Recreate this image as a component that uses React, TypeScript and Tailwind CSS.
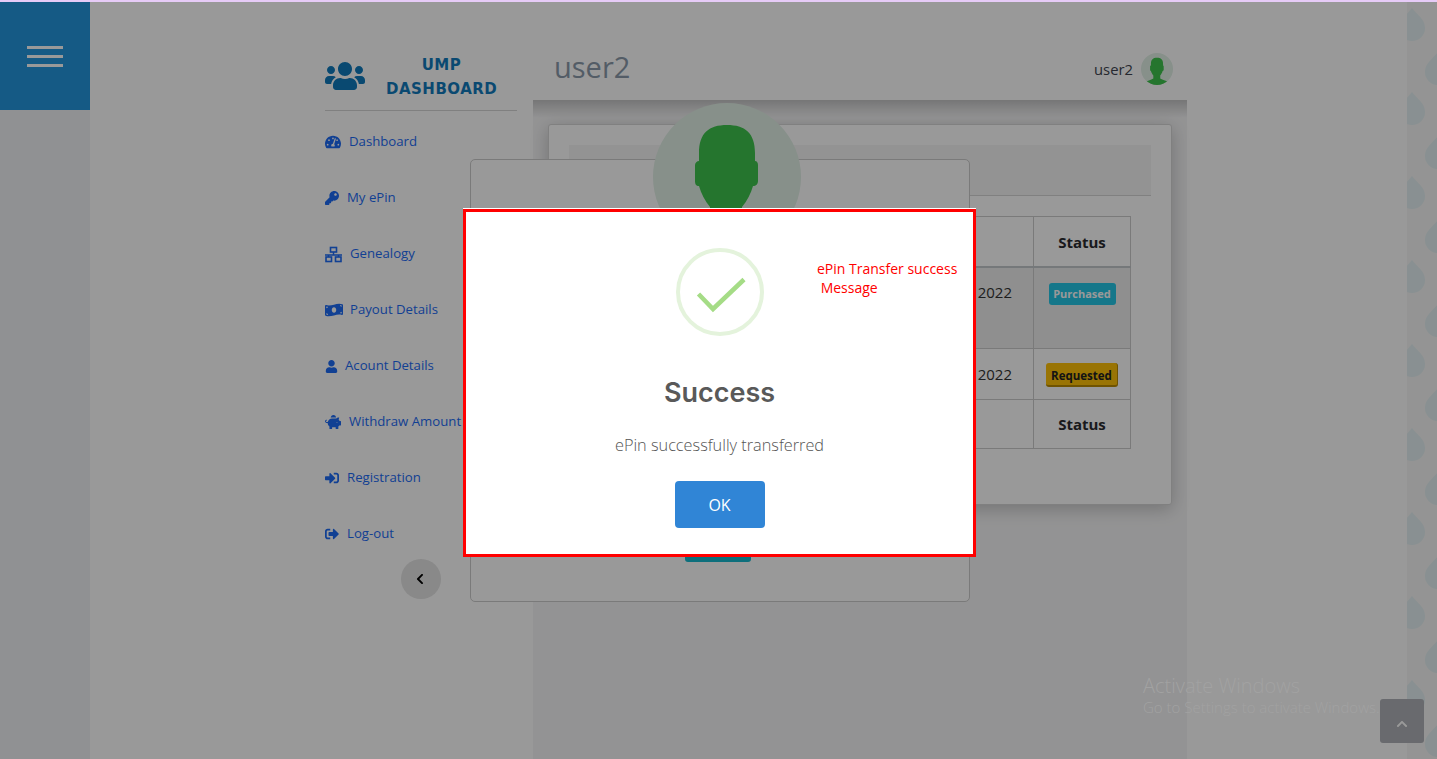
import {
  FaChevronLeft,
  FaChevronUp,
  FaKey,
  FaMoneyBillWave,
  FaPiggyBank,
  FaSignInAlt,
  FaSignOutAlt,
  FaTachometerAlt,
  FaUser,
  FaUsers,
} from "react-icons/fa";

function GenealogyIcon({ size }: { size: number }) {
  return (
    <svg width={size} height={size} viewBox="0 0 17 17" className="shrink-0" fill="none" stroke="currentColor">
      <rect x="5.5" y="1.5" width="6" height="4.5" strokeWidth="1.6" />
      <path d="M8.5 6v3M0 9h17" strokeWidth="1.5" />
      <path d="M3.5 9v2M13.5 9v2" strokeWidth="1.5" />
      <rect x="1" y="11" width="5.5" height="4.5" strokeWidth="1.6" />
      <rect x="10.5" y="11" width="5.5" height="4.5" strokeWidth="1.6" />
    </svg>
  );
}

const menu = [
  { label: "Dashboard", icon: FaTachometerAlt, size: 16, gap: "gap-[8px]" },
  { label: "My ePin", icon: FaKey, size: 14, gap: "gap-[8px]" },
  { label: "Genealogy", icon: GenealogyIcon, size: 17, gap: "gap-[8px]" },
  { label: "Payout Details", icon: FaMoneyBillWave, size: 18, gap: "gap-[7px]" },
  { label: "Acount Details", icon: FaUser, size: 13, gap: "gap-[7px]" },
  { label: "Withdraw Amount", icon: FaPiggyBank, size: 16, gap: "gap-[8px]" },
  { label: "Registration", icon: FaSignInAlt, size: 14, gap: "gap-[8px]" },
  { label: "Log-out", icon: FaSignOutAlt, size: 14, gap: "gap-[8px]" },
];

const dropsLeft = [0, 1, 2, 3, 4, 5, 6, 7, 8];
const dropPath = "c5 7 13 11 13 20a13 13 0 0 1-26 0c0-9 8-13 13-20z";

function AvatarFigure({ className }: { className: string }) {
  return (
    <div className={`overflow-hidden rounded-full bg-[#e1f0e6] ${className}`}>
      <svg viewBox="0 0 148 148" className="h-full w-full" fill="#3fc34e">
        <path d="M46 50c0-20 10-28 28-28s28 8 28 28v8c2 0 3 2 3 4v16c0 3-2 5-5 5-2 7-6 15-11 21v14c10 7 33 9 44 23v9H15v-9c11-14 32-16 42-23v-14c-5-6-9-14-11-21-3 0-4-2-4-5V62c0-2 2-4 4-4z" />
      </svg>
    </div>
  );
}

function StatusHead({ className = "" }: { className?: string }) {
  return <th className={`border border-[#cccccc] text-center text-[15px] font-bold text-[#2b2b30] ${className}`}>Status</th>;
}

export default function App() {
  return (
    <main
      className="relative flex h-[759px] w-full overflow-hidden bg-white"
      style={{ fontFamily: '"Open Sans", "Noto Sans", sans-serif' }}
    >
      <div className="absolute inset-x-0 top-0 z-50 h-[2px] bg-[#e6cbf7]" />

      {/* left strip */}
      <aside className="flex w-[90px] shrink-0 flex-col bg-[#f0f2f5] pt-[2px]">
        <button className="flex h-[108px] w-[90px] flex-col items-center justify-center gap-[6px] bg-[#2396de]">
          <span className="h-[3px] w-[36px] bg-white" />
          <span className="h-[3px] w-[36px] bg-white" />
          <span className="h-[3px] w-[36px] bg-white" />
        </button>
      </aside>

      {/* sidebar */}
      <nav className="ml-[235px] w-[192px] shrink-0 pt-[2px]">
        <div className="flex h-[109px] items-start border-b border-[#d5d5d5] pt-[51px]">
          <FaUsers className="mt-[3px] text-[#0f7bbd]" size={40} />
          <div
            className="ml-[21px] w-[111px] text-center text-[15px] leading-[24px] font-bold tracking-[0.5px] text-[#127bbd]"
            style={{ fontFamily: '"DejaVu Sans", sans-serif' }}
          >
            UMP
            <br />
            DASHBOARD
          </div>
        </div>
        <ul className="mt-[3px]">
          {menu.map(({ label, icon: Icon, size, gap }) => (
            <li key={label} className={`flex h-[56px] items-center whitespace-nowrap text-[13.2px] text-[#1d6bf5] ${gap}`}>
              <Icon size={size} className="shrink-0" />
              <span>{label}</span>
            </li>
          ))}
        </ul>
        <button className="ml-[76px] mt-[-3px] flex h-[40px] w-[40px] items-center justify-center rounded-full bg-[#e4e4e4] pr-[2px] text-black">
          <FaChevronLeft size={12} />
        </button>
      </nav>

      {/* content */}
      <section className="ml-[16px] flex w-[654px] shrink-0 flex-col pt-[2px]">
        <header className="flex h-[98px] shrink-0 items-center justify-between bg-white pl-[21px] pr-[14px] pt-[36px]">
          <h1 className="mb-[4px] text-[29px] text-[#8a9aaa]">user2</h1>
          <div className="flex items-center gap-[8px] text-[14.8px] text-[#40444f]">
            <span>user2</span>
            <AvatarFigure className="h-[32px] w-[32px]" />
          </div>
        </header>

        <div className="flex-1 bg-[#f6f6f7] bg-[linear-gradient(to_bottom,rgba(0,0,0,0.2),rgba(0,0,0,0)_18px)] px-[15px] pt-[24px]">
          <div className="h-[381px] rounded-[3px] border border-[#d5d5d5] bg-white p-[20px] shadow-[0_4px_18px_rgba(0,0,0,0.22)]">
            <div className="h-[51px] border-b border-[#d5d5d5] bg-[#f5f5f5]" />
            <table className="mt-[20px] h-[232px] w-[561px] table-fixed border-collapse text-[15px] text-[#333333]">
              <colgroup>
                <col className="w-[464px]" />
                <col className="w-[97px]" />
              </colgroup>
              <tbody>
                <tr className="h-[50px] border-b-2 border-[#c4c8cc]">
                  <td className="border border-[#cccccc]" />
                  <StatusHead className="pt-[1px]" />
                </tr>
                <tr className="h-[82px] bg-[#eeeeee]">
                  <td className="border border-[#cccccc] pr-[21px] pt-[13px] text-right align-top">2022</td>
                  <td className="border border-[#cccccc] pt-[13px] text-center align-top">
                    <span className="inline-block h-[22px] w-[67px] rounded-[3px] bg-[#23c6e6] text-[11px] leading-[22px] font-bold text-white">
                      Purchased
                    </span>
                  </td>
                </tr>
                <tr className="h-[51px]">
                  <td className="border border-[#cccccc] pr-[21px] text-right">2022</td>
                  <td className="border border-[#cccccc] pt-[1px] text-center">
                    <span className="inline-block h-[24px] w-[72px] rounded-[3px] border-b-2 border-r border-[#b98a00] bg-[#ffc107] text-[11.5px] leading-[25px] font-bold text-[#222222]">
                      Requested
                    </span>
                  </td>
                </tr>
                <tr className="h-[49px]">
                  <td className="border border-[#cccccc]" />
                  <StatusHead />
                </tr>
              </tbody>
            </table>
          </div>
        </div>
      </section>

      <div className="flex-1" />

      {/* drop pattern */}
      <div className="w-[30px] shrink-0 bg-[#f7f7f7]">
        <svg width="30" height="759" viewBox="1407 0 30 759" fill="#e4f1f3">
          {dropsLeft.map((i) => (
            <path key={i} d={`M1412 ${8 + i * 84}${dropPath}`} />
          ))}
          {dropsLeft.map((i) => (
            <path key={i} d={`M1438 ${52 + i * 84}${dropPath}`} />
          ))}
        </svg>
      </div>

      {/* profile dialog behind the alert */}
      <div className="absolute left-[470px] top-[159px] h-[443px] w-[500px] rounded-[5px] border border-[#cccccc] bg-white">
        <AvatarFigure className="absolute left-[182px] top-[-57px] h-[148px] w-[148px]" />
        <div className="absolute bottom-[39px] left-[214px] h-[24px] w-[66px] rounded-[3px] bg-[#17b9cf]" />
      </div>

      <button className="absolute left-[1380px] top-[699px] flex h-[44px] w-[44px] items-center justify-center rounded-[3px] bg-[#afb1b7] pt-[6px] text-white">
        <FaChevronUp size={12} />
      </button>

      <div className="absolute inset-0 z-40 bg-black/40" />

      <div className="absolute left-[1143px] top-[674px] z-50 text-[#a2a2a2]">
        <p className="text-[20px] leading-[24px] font-light">Activate Windows</p>
        <p className="text-[15px] leading-[19px] font-light">Go to Settings to activate Windows.</p>
      </div>

      {/* alert */}
      <div className="absolute left-[463px] top-[209px] z-50 flex h-[348px] w-[513px] flex-col items-center border-[3px] border-[#ff0000] bg-white shadow-[0_-1px_0_#ffffff]">
        <svg width="88" height="88" viewBox="0 0 88 88" className="mt-[36px] shrink-0" fill="none">
          <circle cx="44" cy="44" r="42" stroke="#e4f3dc" strokeWidth="4" />
          <path d="M22.5 46 37 61 68 31.5" stroke="#a5dc86" strokeWidth="4.5" strokeLinejoin="miter" />
        </svg>
        <h2 className="mt-[39px] text-[27px] leading-[36px] font-semibold text-[#595959]" style={{ fontFamily: "Inter, sans-serif" }}>
          Success
        </h2>
        <p className="mt-[22px] text-[16.3px] leading-[24px] font-light text-[#545454]">ePin successfully transferred</p>
        <button className="mt-[24px] h-[47px] w-[90px] rounded-[4px] bg-[#3085d6] text-[16px] text-white">OK</button>
        <p className="absolute left-[351px] top-[47px] whitespace-pre text-[14px] leading-[19px] text-[#ff0000]">
          {"ePin Transfer success\n Message"}
        </p>
      </div>
    </main>
  );
}
